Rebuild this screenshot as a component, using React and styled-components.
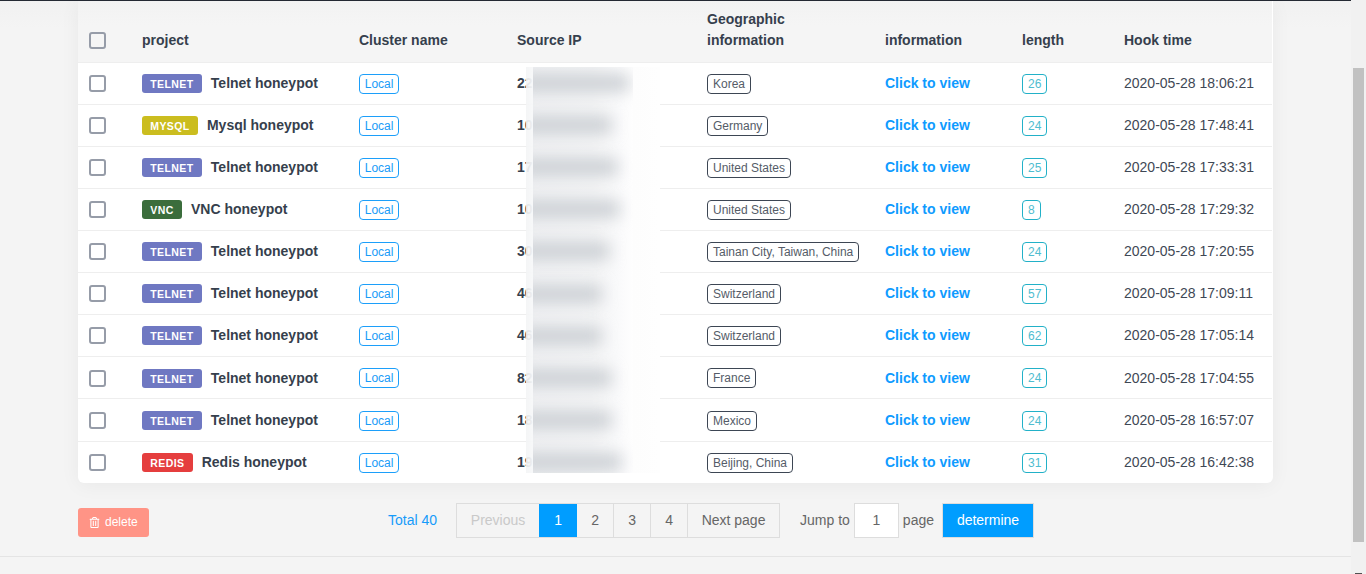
import React from "react";
import styled, { createGlobalStyle } from "styled-components";
import { FaRegTrashAlt } from "react-icons/fa";

const Global = createGlobalStyle`
  html, body { margin: 0; padding: 0; height: 574px; overflow: hidden; background: #f4f4f4; }
  body { font-family: "Liberation Sans", Arial, sans-serif; color: #363f4d; }
  * { box-sizing: border-box; }
`;

const Page = styled.div`
  display: flex;
  height: 574px;
  overflow: hidden;
`;
const Main = styled.main`
  width: 1351px;
  flex: none;
  background: linear-gradient(#f1f1f1, #f4f4f4 28px) no-repeat;
`;
const TopLine = styled.div`
  height: 1px;
  background: #242933;
`;
const Content = styled.div`
  padding: 0 78px;
`;
const Card = styled.div`
  position: relative;
  background: #fff;
  border-radius: 0 0 6px 6px;
  box-shadow: 0 2px 20px rgba(0, 0, 0, 0.05);
  width: 1195px;
  height: 482px;
`;
const Table = styled.table`
  width: 1194px;
  table-layout: fixed;
  border-collapse: separate;
  border-spacing: 0;
`;
const HeadCell = styled.th`
  background: linear-gradient(#f2f2f2, #f5f5f5 24px);
  border-bottom: 1px solid #eeeeee;
  height: 61.7px;
  padding: 0 0 11px 11px;
  text-align: left;
  vertical-align: bottom;
  font-size: 14px;
  line-height: 21px;
  font-weight: 700;
  color: #363f4d;
`;
const Row = styled.tr`
  height: 42.1px;
`;
const Cell = styled.td`
  padding: 0.3px 0 0 11px;
  font-size: 14px;
  line-height: 21px;
  vertical-align: middle;
  white-space: nowrap;
  border-bottom: 1px solid ${(p) => (p.$last ? "transparent" : "#eeeeee")};
`;
const Box = styled.span`
  display: block;
  width: 17px;
  height: 17px;
  border: 2px solid #969ca8;
  border-radius: 3px;
  background: #fff;
`;
const HeadBox = styled(Box)`
  background: #f5f5f5;
  margin-bottom: 2px;
`;
const Kind = styled.span`
  display: inline-block;
  height: 19px;
  line-height: 20px;
  padding: 0 8.3px;
  margin: 0 9px 0.5px 0;
  border-radius: 3px;
  font-size: 10.5px;
  font-weight: 700;
  letter-spacing: 0.4px;
  color: #fff;
  background: ${(p) => p.$bg};
  vertical-align: middle;
`;
const Name = styled.span`
  display: inline-block;
  margin-bottom: 0.5px;
  font-weight: 700;
  color: #363f4d;
  vertical-align: middle;
`;
const Tag = styled.span`
  display: inline-block;
  height: 20px;
  line-height: 18px;
  padding: 0 5px;
  margin-bottom: 0.3px;
  border: 1px solid ${(p) => p.$line};
  border-radius: 4px;
  font-size: 12px;
  color: ${(p) => p.$ink};
  vertical-align: middle;
`;
const LocalTag = styled(Tag)`
  margin-left: -0.3px;
`;
const Ip = styled.span`
  font-weight: 700;
  color: #363f4d;
`;
const ViewLink = styled.a`
  font-weight: 700;
  color: #0f9bff;
`;
const Time = styled.span`
  color: #3f4855;
`;
const Redaction = styled.div`
  position: absolute;
  left: 448px;
  top: 66px;
  width: 134px;
  height: 406px;
  padding-left: 7px;
  background: linear-gradient(90deg, rgba(243, 244, 245, 0.9) 0, rgba(247, 248, 249, 0.96) 7px, #fdfdfd 107px, #fefefe 134px);
`;
const SmearClip = styled.div`
  position: relative;
  width: 100px;
  height: 100%;
  overflow: hidden;
  background: linear-gradient(90deg, #f0f1f3 0, #f3f4f5 60px, #fbfbfc 90px, #fefefe 100px);
`;
const Smear = styled.i`
  position: absolute;
  display: block;
  left: -12px;
  height: 16px;
  background: #c9cdd2;
  filter: blur(8px);
`;
const Bar = styled.div`
  display: flex;
  align-items: flex-start;
  margin-top: 20px;
`;
const DeleteBtn = styled.button`
  display: flex;
  align-items: center;
  gap: 5px;
  width: 71px;
  height: 29px;
  margin-top: 5px;
  padding: 0 0 1px 11px;
  border: 0;
  border-radius: 3px;
  background: #ff9486;
  color: #fff;
  font: 12px "Liberation Sans", Arial, sans-serif;
`;
const Total = styled.span`
  margin-left: 239px;
  margin-right: 19px;
  font-size: 14px;
  line-height: 35px;
  color: #169bfa;
`;
const Pager = styled.div`
  display: flex;
  height: 35px;
  border: 1px solid #dddddd;
`;
const PageItem = styled.span`
  display: flex;
  align-items: center;
  justify-content: center;
  width: ${(p) => p.$w}px;
  padding-bottom: 2px;
  font-size: 14px;
  color: ${(p) => (p.$active ? "#fff" : p.$off ? "#c9c9c9" : "#666")};
  background: ${(p) => (p.$active ? "#009dff" : "transparent")};
  border-left: ${(p) => (p.$first || p.$active ? "0" : "1px solid #dddddd")};
`;
const JumpText = styled.span`
  margin-left: ${(p) => p.$ml}px;
  margin-right: ${(p) => p.$mr}px;
  font-size: 14px;
  line-height: 35px;
  color: #666;
`;
const JumpInput = styled.span`
  display: flex;
  align-items: center;
  justify-content: center;
  width: 45px;
  height: 35px;
  padding-bottom: 2px;
  background: #fff;
  border: 1px solid #dddddd;
  font-size: 14px;
  color: #666;
`;
const Go = styled.button`
  width: 92px;
  height: 35px;
  padding: 0 0 2px;
  background: #009dff;
  border: 1px solid #dddddd;
  color: #fff;
  font: 14px "Liberation Sans", Arial, sans-serif;
`;
const FootRule = styled.div`
  margin-top: 18px;
  height: 1px;
  background: #e4e4e4;
`;
const Track = styled.div`
  width: 15px;
  flex: none;
  height: 574px;
  background: #f1f1f1;
  padding: 68px 2px 0;
  position: relative;
`;
const Thumb = styled.div`
  height: 474px;
  background: #c1c1c1;
`;
const ArrowDown = styled.div`
  position: absolute;
  left: 4px;
  bottom: 0;
  width: 7px;
  height: 1px;
  background: #505050;
`;

const kinds = {
  telnet: { label: "TELNET", bg: "#6f78c2", name: "Telnet honeypot" },
  mysql: { label: "MYSQL", bg: "#cbbd1f", name: "Mysql honeypot" },
  vnc: { label: "VNC", bg: "#3b6d3c", name: "VNC honeypot" },
  redis: { label: "REDIS", bg: "#e53e3e", name: "Redis honeypot" },
};

const rows = [
  ["telnet", "22", "Korea", "26", "2020-05-28 18:06:21"],
  ["mysql", "10", "Germany", "24", "2020-05-28 17:48:41"],
  ["telnet", "17", "United States", "25", "2020-05-28 17:33:31"],
  ["vnc", "10", "United States", "8", "2020-05-28 17:29:32"],
  ["telnet", "30", "Tainan City, Taiwan, China", "24", "2020-05-28 17:20:55"],
  ["telnet", "46", "Switzerland", "57", "2020-05-28 17:09:11"],
  ["telnet", "46", "Switzerland", "62", "2020-05-28 17:05:14"],
  ["telnet", "82", "France", "24", "2020-05-28 17:04:55"],
  ["telnet", "18", "Mexico", "24", "2020-05-28 16:57:07"],
  ["redis", "19", "Beijing, China", "31", "2020-05-28 16:42:38"],
];
const smears = [96, 78, 84, 86, 76, 68, 68, 78, 78, 88];
const widths = [53, 217, 158, 190, 178, 137, 102, 159];

export default function App() {
  return (
    <Page>
      <Global />
      <Main>
        <TopLine />
        <Content>
          <Card>
            <Table>
              <colgroup>
                {widths.map((w, i) => (
                  <col key={i} style={{ width: w }} />
                ))}
              </colgroup>
              <thead>
                <tr>
                  <HeadCell><HeadBox /></HeadCell>
                  <HeadCell>project</HeadCell>
                  <HeadCell>Cluster name</HeadCell>
                  <HeadCell>Source IP</HeadCell>
                  <HeadCell>Geographic<br />information</HeadCell>
                  <HeadCell>information</HeadCell>
                  <HeadCell>length</HeadCell>
                  <HeadCell>Hook time</HeadCell>
                </tr>
              </thead>
              <tbody>
                {rows.map((r, i) => {
                  const k = kinds[r[0]];
                  const last = i === rows.length - 1;
                  return (
                    <Row key={i}>
                      <Cell $last={last}><Box /></Cell>
                      <Cell $last={last}>
                        <Kind $bg={k.bg}>{k.label}</Kind>
                        <Name>{k.name}</Name>
                      </Cell>
                      <Cell $last={last}><LocalTag $line="#1c9ffa" $ink="#1a9cf7">Local</LocalTag></Cell>
                      <Cell $last={last}><Ip>{r[1]}</Ip></Cell>
                      <Cell $last={last}><Tag $line="#3d4654" $ink="#555c68">{r[2]}</Tag></Cell>
                      <Cell $last={last}><ViewLink>Click to view</ViewLink></Cell>
                      <Cell $last={last}><Tag $line="#22b1c8" $ink="#4fbdd0">{r[3]}</Tag></Cell>
                      <Cell $last={last}><Time>{r[4]}</Time></Cell>
                    </Row>
                  );
                })}
              </tbody>
            </Table>
            <Redaction aria-hidden="true">
              <SmearClip>
                {smears.map((w, i) => (
                  <Smear key={i} style={{ top: 8 + i * 42.1, width: w + 12 }} />
                ))}
              </SmearClip>
            </Redaction>
          </Card>
          <Bar>
            <DeleteBtn><FaRegTrashAlt size={11} />delete</DeleteBtn>
            <Total>Total 40</Total>
            <Pager>
              <PageItem $w={82} $first $off>Previous</PageItem>
              <PageItem $w={38} $active>1</PageItem>
              <PageItem $w={36} $first>2</PageItem>
              <PageItem $w={37}>3</PageItem>
              <PageItem $w={37}>4</PageItem>
              <PageItem $w={92}>Next page</PageItem>
            </Pager>
            <JumpText $ml={20} $mr={4}>Jump to</JumpText>
            <JumpInput>1</JumpInput>
            <JumpText $ml={4} $mr={8}>page</JumpText>
            <Go>determine</Go>
          </Bar>
        </Content>
        <FootRule />
      </Main>
      <Track>
        <Thumb />
        <ArrowDown />
      </Track>
    </Page>
  );
}
